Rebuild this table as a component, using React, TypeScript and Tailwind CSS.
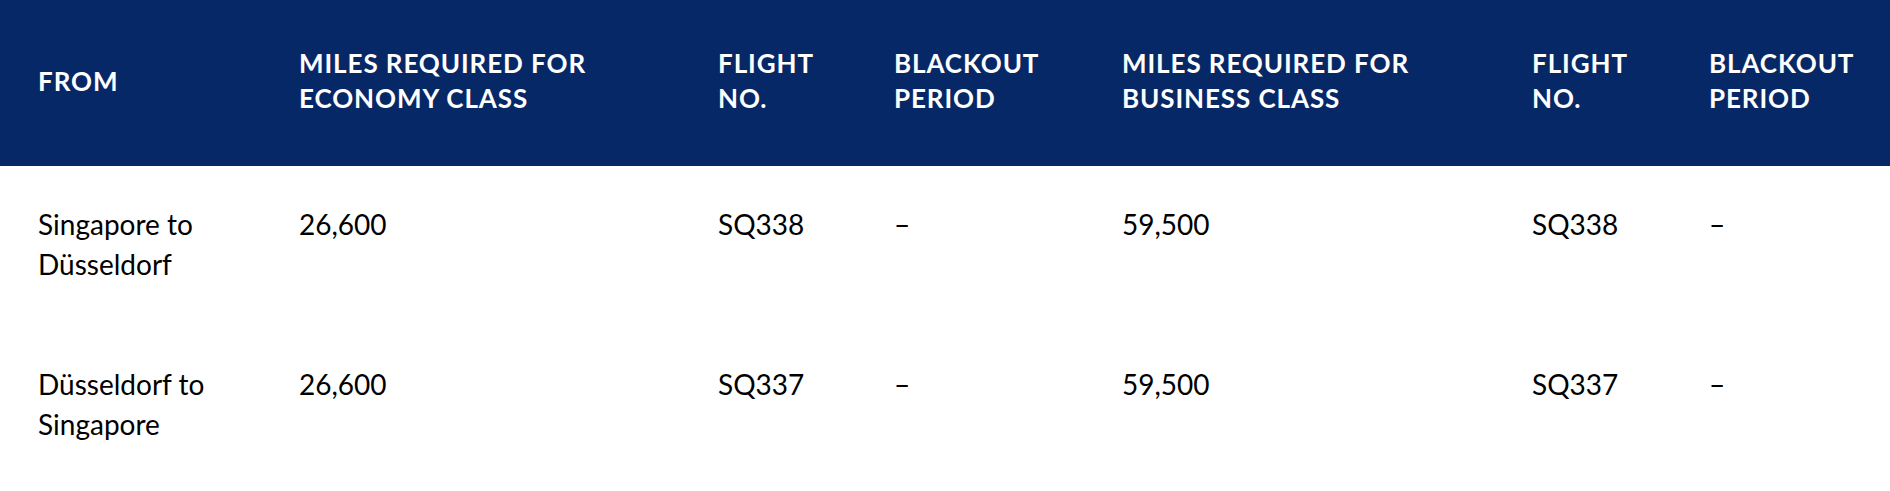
const columns = [
  { label: ["FROM"], width: "w-[261px]" },
  { label: ["MILES REQUIRED FOR", "ECONOMY CLASS"], width: "w-[419px]" },
  { label: ["FLIGHT", "NO."], width: "w-[176px]" },
  { label: ["BLACKOUT", "PERIOD"], width: "w-[228px]" },
  { label: ["MILES REQUIRED FOR", "BUSINESS CLASS"], width: "w-[410px]" },
  { label: ["FLIGHT", "NO."], width: "w-[177px]" },
  { label: ["BLACKOUT", "PERIOD"], width: "w-[219px]" },
];

const rows = [
  [["Singapore to", "Düsseldorf"], ["26,600"], ["SQ338"], ["–"], ["59,500"], ["SQ338"], ["–"]],
  [["Düsseldorf to", "Singapore"], ["26,600"], ["SQ337"], ["–"], ["59,500"], ["SQ337"], ["–"]],
];

export default function App() {
  return (
    <div className="w-[1890px] bg-white font-['Lato',sans-serif]">
      <table className="w-full border-collapse table-fixed">
        <thead>
          <tr className="bg-[#072866] h-[166px]">
            {columns.map((col, i) => (
              <th
                key={i}
                className={`${col.width} pl-[38px] pr-2 pb-[4px] align-middle text-left text-white font-bold text-[26px] leading-[35px] tracking-[0.035em]`}
              >
                {col.label.map((line, j) => (
                  <div key={j}>{line}</div>
                ))}
              </th>
            ))}
          </tr>
        </thead>
        <tbody>
          {rows.map((row, i) => (
            <tr key={i} className="h-[160px]">
              {row.map((cell, j) => (
                <td
                  key={j}
                  className="pl-[38px] pr-2 pt-[38px] pb-[42px] align-top text-left text-black text-[28px] leading-[40px]"
                >
                  {cell.map((line, k) => (
                    <div key={k}>{line}</div>
                  ))}
                </td>
              ))}
            </tr>
          ))}
        </tbody>
      </table>
    </div>
  );
}
